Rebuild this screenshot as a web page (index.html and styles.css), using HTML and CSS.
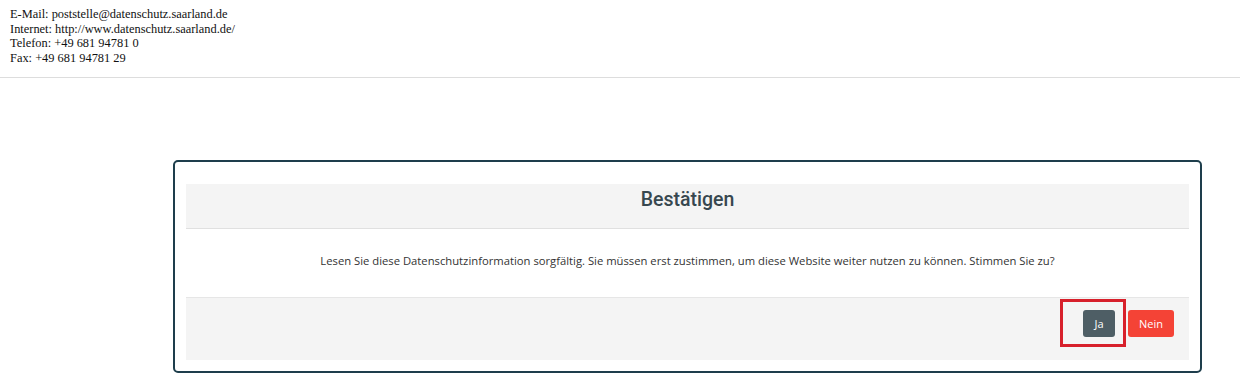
FILE: index.html
```html
<!DOCTYPE html>
<html lang="de">
<head>
    <meta charset="UTF-8">
    <title>Bestätigen</title>
    <link rel="stylesheet" href="styles.css">
</head>
<body>
    <div class="contact">
        E-Mail: poststelle@datenschutz.saarland.de<br>
        Internet: http://www.datenschutz.saarland.de/<br>
        Telefon: +49 681 94781 0<br>
        Fax: +49 681 94781 29
    </div>
    <hr class="divider">
    <div class="dialog">
        <div class="dialog-header">Bestätigen</div>
        <div class="dialog-body">
            Lesen Sie diese Datenschutzinformation sorgfältig. Sie müssen erst zustimmen, um diese Website weiter nutzen zu können. Stimmen Sie zu?
        </div>
        <div class="dialog-footer">
            <div class="highlight">
                <button class="btn btn-yes">Ja</button>
            </div>
            <button class="btn btn-no">Nein</button>
        </div>
    </div>
</body>
</html>
```

FILE: styles.css
```css
* {
    box-sizing: border-box;
}

body {
    margin: 0;
    background-color: #fff;
}

.contact {
    font-family: 'Liberation Serif', serif;
    font-size: 12.4px;
    line-height: 14.5px;
    color: #111;
    padding: 7px 10px 0;
}

.divider {
    border: none;
    border-top: 1px solid #ddd;
    margin: 12px 0 0;
}

.dialog {
    margin: 82px 0 0 173px;
    width: 1029px;
    border: 2px solid #1e3e4c;
    border-radius: 5px;
    padding: 22px 11px 11px;
    font-family: 'Open Sans', sans-serif;
}

.dialog-header {
    background-color: #f4f4f4;
    border-bottom: 1px solid #e0e0e0;
    height: 45px;
    line-height: 31px;
    text-align: center;
    font-family: Roboto, sans-serif;
    font-weight: 500;
    font-size: 19.5px;
    color: #37474f;
}

.dialog-body {
    height: 69px;
    display: flex;
    align-items: center;
    justify-content: center;
    padding-bottom: 5px;
    font-size: 11.25px;
    color: #333;
    border-bottom: 1px solid #e6e6e6;
}

.dialog-footer {
    background-color: #f4f4f4;
    height: 62px;
    display: flex;
    justify-content: flex-end;
    align-items: flex-start;
    padding-right: 15px;
}

.highlight {
    border: 3px solid #d7202b;
    width: 66px;
    height: 48px;
    display: flex;
    justify-content: flex-end;
    align-items: flex-start;
    padding: 8px 8px 0 0;
    margin-top: 1px;
}

.btn {
    border: none;
    border-radius: 3px;
    color: #fff;
    font-family: 'Open Sans', sans-serif;
    font-size: 11px;
    height: 27px;
    padding: 0;
    cursor: pointer;
}

.btn-yes {
    background-color: #4e5e65;
    width: 32px;
}

.btn-no {
    background-color: #f44336;
    width: 46px;
    margin: 12px 0 0 2px;
}
```
